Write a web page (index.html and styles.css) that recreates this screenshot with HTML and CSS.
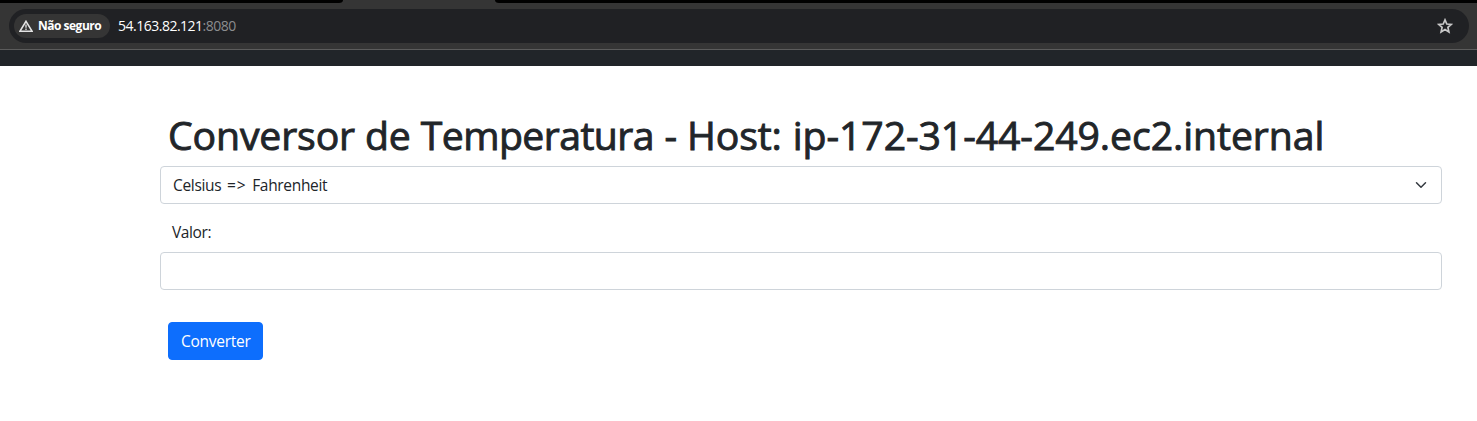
FILE: index.html
```html
<!DOCTYPE html>
<html lang="pt-BR">
<head>
<meta charset="utf-8">
<title>Conversor de Temperatura</title>
<link rel="stylesheet" href="styles.css">
</head>
<body>
<header class="browser">
  <div class="tabstrip"><div class="tab-left"></div><div class="tab-active"></div><div class="tab-right"></div></div>
  <div class="toolbar">
    <div class="address">
      <div class="security">
        <svg class="warning" viewBox="0 0 14 12" width="14" height="12"><path d="M7 1.3 13 11.2H1Z" fill="none" stroke="#e3e3e3" stroke-width="1.6"/><path d="M7 4.6v3.2M7 8.6v1.4" stroke="#e3e3e3" stroke-width="1.3"/></svg>
        <span class="security-text">Não seguro</span>
      </div>
      <div class="url"><span class="host">54.163.82.121</span><span class="port">:8080</span></div>
      <svg class="star" viewBox="0 0 16 16" width="16" height="16"><path d="M8 1.9 9.8 6 14.3 6.4 10.9 9.4 11.9 13.9 8 11.5 4.1 13.9 5.1 9.4 1.7 6.4 6.2 6Z" fill="none" stroke="#c7c7c7" stroke-width="1.7"/></svg>
    </div>
  </div>
  <div class="navbar"></div>
</header>
<main class="content">
  <h1 class="title">Conversor de <span class="subject">Temperatura</span> - Host: <span class="hostname">ip-172-31-44-249.ec2.internal</span></h1>
  <div class="select"><span class="select-text">Celsius <span class="arrow">=&gt;</span> Fahrenheit</span>
    <svg class="chevron" viewBox="0 0 16 16" width="16" height="12"><path d="m2 5 6 6 6-6" fill="none" stroke="#343a40" stroke-width="2" stroke-linecap="round" stroke-linejoin="round"/></svg>
  </div>
  <label class="label" for="valor"><span class="label-text">Valor:</span></label>
  <input class="input" id="valor" type="text">
  <button class="button" type="button"><span class="button-text">Converter</span></button>
</main>
</body>
</html>
```

FILE: styles.css
```css
* { box-sizing: border-box; }
body {
  margin: 0;
  background: #fff;
  color: #212529;
  font: 400 15.5px/24px "Open Sans", "Noto Sans", sans-serif;
  overflow: hidden;
}
.tabstrip { display: flex; height: 3px; background: #353535; }
.tab-left { width: 343px; background: #000; border-bottom-right-radius: 4px 3px; }
.tab-active { width: 152px; }
.tab-right { flex: 1; background: #000; border-bottom-left-radius: 4px 3px; }
.toolbar { height: 47px; padding: 6px 8px 0 9px; background: #353535; border-bottom: 1px solid #5c5c5c; }
.address {
  display: flex;
  align-items: center;
  height: 34px;
  padding: 0 16px 0 5px;
  border-radius: 17px;
  background: #202124;
}
.security {
  display: flex;
  align-items: center;
  width: 96px;
  height: 24px;
  padding-left: 5px;
  border-radius: 12px;
  background: #353535;
}
.security-text { margin-left: 5px; font-size: 12px; font-weight: 700; color: #fff; letter-spacing: -0.5px; white-space: nowrap; }
.url { margin-left: 8px; font-size: 14px; letter-spacing: -0.5px; }
.host { color: #fff; }
.port { color: #8c8d8f; }
.star { margin-left: auto; }
.navbar { height: 16px; background: #212529; }
.content { padding: 45px 35px 0 160px; }
.title {
  margin: 0 0 7px 8px;
  font-size: 39.2px;
  line-height: 48px;
  font-weight: 400;
  letter-spacing: -0.13px;
  white-space: nowrap;
  -webkit-text-stroke: 0.9px #212529;
}
.subject { margin-right: 0.5px; letter-spacing: -0.58px; }
.hostname { margin-left: 1px; letter-spacing: -0.08px; }
.select {
  display: flex;
  align-items: center;
  justify-content: space-between;
  height: 38px;
  padding: 0 12px;
  border: 1px solid #ced4da;
  border-radius: 4px;
}
.select-text { letter-spacing: -0.33px; }
.arrow { margin: 0 2px; letter-spacing: 0.9px; }
.label { display: block; margin: 16px 0 8px 12px; letter-spacing: -0.4px; }
.input { display: block; width: 100%; height: 38px; padding: 6px 12px; border: 1px solid #ced4da; border-radius: 4px; font: inherit; }
.button {
  display: block;
  width: 95px;
  height: 38px;
  margin: 32px 0 0 8px;
  padding: 0 12px;
  border: 1px solid #0d6efd;
  border-radius: 4px;
  background: #0d6efd;
  color: #fff;
  font: inherit;
  letter-spacing: -0.27px;
}
```
